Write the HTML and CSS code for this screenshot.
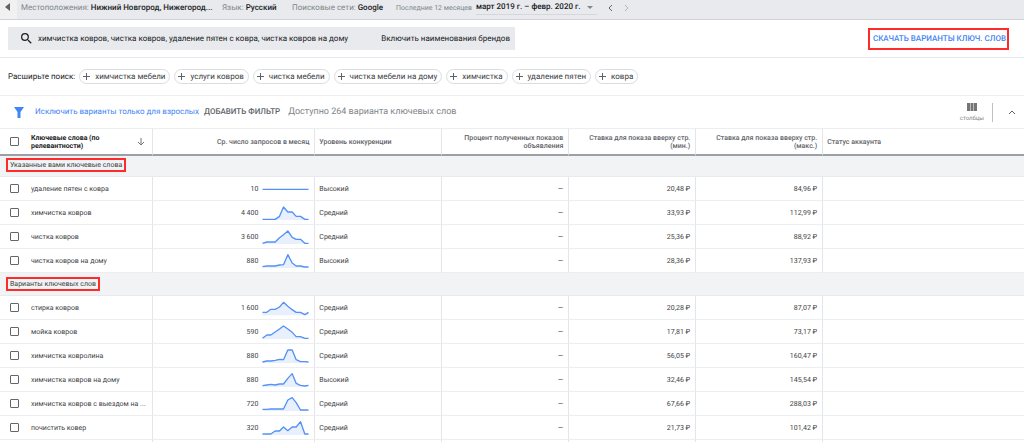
FILE: index.html
```html
<!DOCTYPE html>
<html lang="ru">
<head>
<meta charset="utf-8">
<meta name="viewport" content="width=device-width, initial-scale=1">
<title>Варианты ключевых слов</title>
<link rel="stylesheet" href="styles.css">
</head>
<body>
<header class="topbar">
  <button class="back" aria-label="Назад"><svg viewBox="0 0 5 8"><path d="M5 0v8L0 4z"/></svg></button>
  <div class="setting place"><span>Местоположения:</span> <b>Нижний Новгород, Нижегород...</b></div>
  <div class="setting lang"><span>Язык:</span> <b>Русский</b></div>
  <div class="setting nets"><span>Поисковые сети:</span> <b>Google</b></div>
  <div class="period">
    <span class="period-label">Последние 12 месяцев</span>
    <button class="range">март 2019 г. – февр. 2020 г.<svg viewBox="0 0 6 3"><path d="M0 0h6L3 3z"/></svg></button>
  </div>
  <button class="step" aria-label="Предыдущий период"><svg viewBox="0 0 5 8"><path d="M4 1L1 4l3 3"/></svg></button>
  <button class="step off" aria-label="Следующий период"><svg viewBox="0 0 5 8"><path d="M1 1l3 3-3 3"/></svg></button>
</header>

<section class="search-band">
  <div class="search">
    <svg class="lens" viewBox="3 3 18 18"><path d="M15.5 14h-.79l-.28-.27A6.47 6.47 0 0 0 16 9.5 6.5 6.5 0 1 0 9.5 16c1.61 0 3.09-.59 4.23-1.57l.27.28v.79l5 4.99L20.49 19l-4.99-5zm-6 0C7.01 14 5 11.99 5 9.5S7.01 5 9.5 5 14 7.01 14 9.5 11.99 14 9.5 14z"/></svg>
    <input class="query" type="text" aria-label="Ключевые слова" value="химчистка ковров, чистка ковров, удаление пятен с ковра, чистка ковров на дому">
    <button class="brands">Включить наименования брендов</button>
  </div>
  <button class="download">СКАЧАТЬ ВАРИАНТЫ КЛЮЧ. СЛОВ</button>
</section>

<section class="expand">
  <span class="expand-label">Расширьте поиск:</span>
  <button class="chip"><i class="plus"></i>химчистка мебели</button>
  <button class="chip"><i class="plus"></i>услуги ковров</button>
  <button class="chip"><i class="plus"></i>чистка мебели</button>
  <button class="chip"><i class="plus"></i>чистка мебели на дому</button>
  <button class="chip"><i class="plus"></i>химчистка</button>
  <button class="chip"><i class="plus"></i>удаление пятен</button>
  <button class="chip"><i class="plus"></i>ковра</button>
</section>

<section class="toolbar">
  <svg class="funnel" viewBox="0 0 10 11"><path d="M0 0h10L6.500 5v6h-3V5z"/></svg>
  <button class="adult">Исключить варианты только для взрослых</button>
  <button class="add-filter">ДОБАВИТЬ ФИЛЬТР</button>
  <span class="available">Доступно 264 варианта ключевых слов</span>
  <button class="columns"><svg viewBox="0 0 10 8"><path d="M0 0h3v8H0zM3.500 0h3v8h-3zM7 0h3v8H7z"/></svg>столбцы</button>
  <button class="collapse" aria-label="Свернуть"><svg viewBox="0 0 8 5"><path d="M1 4l3-3 3 3"/></svg></button>
</section>

<table class="grid">
  <colgroup><col class="c-key"><col class="c-vol"><col class="c-mid"><col class="c-mid"><col class="c-mid"><col class="c-mid"><col></colgroup>
  <thead>
    <tr>
      <th scope="col"><div class="key"><input type="checkbox" aria-label="Выбрать все"><span class="sort-name">Ключевые слова (по релевантности)</span><svg class="sort" viewBox="0 0 8 8"><path d="M4 0v7M1 4l3 3 3-3"/></svg></div></th>
      <th scope="col" class="num">Ср. число запросов в месяц</th>
      <th scope="col">Уровень конкуренции</th>
      <th scope="col" class="num">Процент полученных показов<br>объявления</th>
      <th scope="col" class="num">Ставка для показа вверху стр.<br>(мин.)</th>
      <th scope="col" class="num">Ставка для показа вверху стр.<br>(макс.)</th>
      <th scope="col">Статус аккаунта</th>
    </tr>
  </thead>
  <tbody>
    <tr class="group first"><th colspan="7" scope="rowgroup"><span class="mark">Указанные вами ключевые слова</span></th></tr>
    <tr>
      <td><label class="key"><input type="checkbox"><span>удаление пятен с ковра</span></label></td>
      <td><div class="vol">10<svg viewBox="0 0 140 48"><polyline points="1,25 139,25"/></svg></div></td>
      <td>Высокий</td><td class="num">—</td><td class="num">20,48 ₽</td><td class="num">84,96 ₽</td><td></td>
    </tr>
    <tr>
      <td><label class="key"><input type="checkbox"><span>химчистка ковров</span></label></td>
      <td><div class="vol">4 400<svg viewBox="0 0 140 48"><polygon points="1,45 1,43 39,43 52,34 64,6 77,21 90,21 102,34 115,34 128,43 139,43 139,45"/><polyline points="1,43 14,43 26,43 39,43 52,34 64,6 77,21 90,21 102,34 115,34 128,43 139,43"/></svg></div></td>
      <td>Средний</td><td class="num">—</td><td class="num">33,93 ₽</td><td class="num">112,99 ₽</td><td></td>
    </tr>
    <tr>
      <td><label class="key"><input type="checkbox"><span>чистка ковров</span></label></td>
      <td><div class="vol">3 600<svg viewBox="0 0 140 48"><polygon points="1,45 1,43 14,39 39,39 52,26 64,17 77,6 90,25 102,31 115,31 128,43 139,43 139,45"/><polyline points="1,43 14,39 26,39 39,39 52,26 64,17 77,6 90,25 102,31 115,31 128,43 139,43"/></svg></div></td>
      <td>Средний</td><td class="num">—</td><td class="num">25,36 ₽</td><td class="num">88,92 ₽</td><td></td>
    </tr>
    <tr>
      <td><label class="key"><input type="checkbox"><span>чистка ковров на дому</span></label></td>
      <td><div class="vol">880<svg viewBox="0 0 140 48"><polygon points="1,45 1,41 14,39 39,39 52,36 64,35 77,5 90,30 102,39 115,39 128,42 139,42 139,45"/><polyline points="1,41 14,39 26,39 39,39 52,36 64,35 77,5 90,30 102,39 115,39 128,42 139,42"/></svg></div></td>
      <td>Высокий</td><td class="num">—</td><td class="num">28,36 ₽</td><td class="num">137,93 ₽</td><td></td>
    </tr>
    <tr class="group"><th colspan="7" scope="rowgroup"><span class="mark">Варианты ключевых слов</span></th></tr>
    <tr>
      <td><label class="key"><input type="checkbox"><span>стирка ковров</span></label></td>
      <td><div class="vol">1 600<svg viewBox="0 0 140 48"><polygon points="1,46 1,37 14,37 26,28 39,28 52,21 64,7 77,19 90,29 102,37 115,37 128,44 139,37 139,46"/><polyline points="1,37 14,37 26,28 39,28 52,21 64,7 77,19 90,29 102,37 115,37 128,44 139,37"/></svg></div></td>
      <td>Средний</td><td class="num">—</td><td class="num">20,28 ₽</td><td class="num">87,07 ₽</td><td></td>
    </tr>
    <tr>
      <td><label class="key"><input type="checkbox"><span>мойка ковров</span></label></td>
      <td><div class="vol">590<svg viewBox="0 0 140 48"><polygon points="1,45 1,43 14,33 26,33 39,24 52,15 64,6 77,15 90,25 102,38 115,38 128,43 139,43 139,45"/><polyline points="1,43 14,33 26,33 39,24 52,15 64,6 77,15 90,25 102,38 115,38 128,43 139,43"/></svg></div></td>
      <td>Средний</td><td class="num">—</td><td class="num">17,81 ₽</td><td class="num">73,17 ₽</td><td></td>
    </tr>
    <tr>
      <td><label class="key"><input type="checkbox"><span>химчистка ковролина</span></label></td>
      <td><div class="vol">880<svg viewBox="0 0 140 48"><polygon points="1,45 1,42 14,39 26,39 39,37 52,34 64,35 77,6 90,6 102,35 115,41 139,42 139,45"/><polyline points="1,42 14,39 26,39 39,37 52,34 64,35 77,6 90,6 102,35 115,41 128,41 139,42"/></svg></div></td>
      <td>Средний</td><td class="num">—</td><td class="num">56,05 ₽</td><td class="num">160,47 ₽</td><td></td>
    </tr>
    <tr>
      <td><label class="key"><input type="checkbox"><span>химчистка ковров на дому</span></label></td>
      <td><div class="vol">880<svg viewBox="0 0 140 48"><polygon points="1,45 1,41 26,37 39,39 52,36 64,36 77,19 90,5 102,34 115,40 128,42 139,40 139,45"/><polyline points="1,41 14,39 26,37 39,39 52,36 64,36 77,19 90,5 102,34 115,40 128,42 139,40"/></svg></div></td>
      <td>Высокий</td><td class="num">—</td><td class="num">32,46 ₽</td><td class="num">145,54 ₽</td><td></td>
    </tr>
    <tr>
      <td><label class="key"><input type="checkbox"><span>химчистка ковров с выездом на ...</span></label></td>
      <td><div class="vol">720<svg viewBox="0 0 140 48"><polygon points="1,45 1,40 26,39 64,39 77,12 90,5 102,20 115,42 139,42 139,45"/><polyline points="1,40 14,40 26,39 39,39 52,39 64,39 77,12 90,5 102,20 115,42 128,42 139,42"/></svg></div></td>
      <td>Средний</td><td class="num">—</td><td class="num">67,66 ₽</td><td class="num">288,03 ₽</td><td></td>
    </tr>
    <tr>
      <td><label class="key"><input type="checkbox"><span>почистить ковер</span></label></td>
      <td><div class="vol">320<svg viewBox="0 0 140 48"><polygon points="1,45 1,42 26,42 39,33 52,33 64,21 77,32 90,21 102,21 115,5 128,42 139,42 139,45"/><polyline points="1,42 14,42 26,42 39,33 52,33 64,21 77,32 90,21 102,21 115,5 128,42 139,42"/></svg></div></td>
      <td>Средний</td><td class="num">—</td><td class="num">21,73 ₽</td><td class="num">101,42 ₽</td><td></td>
    </tr>
    <tr class="tail"><td></td><td></td><td></td><td></td><td></td><td></td><td></td></tr>
  </tbody>
</table>
</body>
</html>
```
FILE: styles.css
```css
* { box-sizing: border-box; }

body {
  margin: 0;
  background: #fff;
  color: #3c4043;
  font-family: Roboto, "Liberation Sans", sans-serif;
  font-size: 8px;
  line-height: 8px;
  text-rendering: geometricPrecision;
}

button, input { text-rendering: inherit; }

button {
  border: 0;
  padding: 0;
  background: none;
  color: inherit;
  font: inherit;
  white-space: nowrap;
  cursor: pointer;
}

svg { display: block; flex: none; }

/* Top bar */
.topbar {
  display: flex;
  align-items: center;
  height: 20px;
  padding-bottom: 4px;
  background: #e8eaed;
  border-bottom: 1px solid #d0d2d5;
  white-space: nowrap;
}
.back {
  width: 17px;
  height: 19px;
  margin-bottom: -4px;
  padding: 0 0 5px 5px;
  background: #f1f1f1;
}
.back svg { width: 5px; height: 8px; fill: #5f6368; }
.setting, .period-label { color: #80868b; }
.setting b, .range { color: #202124; font-weight: 500; }
.place { width: 201px; margin-left: 4px; }
.lang { width: 70px; }
.nets { width: 104px; }
.period { display: flex; align-items: center; gap: 4px; }
.period-label { font-size: 7px; }
.range {
  display: flex;
  justify-content: space-between;
  align-items: center;
  width: 121px;
  height: 14px;
  border-bottom: 1px solid #d5d7da;
  padding-right: 4px;
}
.range svg { width: 6px; height: 3px; fill: #80868b; }
.step { margin-left: 11px; }
.step svg { width: 5px; height: 8px; fill: none; stroke: #5f6368; }
.step.off svg { stroke: #b0b3b7; }

/* Search */
.search-band {
  display: flex;
  justify-content: space-between;
  align-items: center;
  height: 38px;
  padding: 0 15px 0 8px;
  border-bottom: 1px solid #e8eaed;
}
.search {
  display: flex;
  align-items: center;
  width: 507px;
  height: 23px;
  padding: 0 5px 0 13px;
  background: #e8eaed;
}
.lens { width: 11px; height: 11px; fill: #202124; }
.query {
  flex: 1;
  min-width: 0;
  margin-left: 6px;
  padding: 0;
  border: 0;
  background: none;
  color: #202124;
  font: inherit;
}
.brands { color: #202124; }
.download {
  height: 22px;
  padding: 0 1px 0 3px;
  border: 2px solid #ff2a2a;
  color: #4285f4;
  font-weight: 500;
}

/* Suggestions */
.expand {
  display: flex;
  align-items: center;
  gap: 4px;
  height: 38px;
  padding-left: 8px;
  border-bottom: 1px solid #eeeff1;
}
.expand-label { color: #202124; }
.chip {
  display: flex;
  align-items: center;
  gap: 5px;
  height: 15px;
  padding: 0 4px 0 3px;
  border: 1px solid #dadce0;
  border-radius: 8px;
}
.plus {
  width: 7px;
  height: 7px;
  background:
    linear-gradient(#5f6368, #5f6368) center / 7px 1px no-repeat,
    linear-gradient(#5f6368, #5f6368) center / 1px 7px no-repeat;
}

/* Filter bar */
.toolbar {
  display: flex;
  align-items: center;
  height: 32px;
  padding: 0 8px 0 14px;
}
.funnel { width: 10px; height: 11px; fill: #4285f4; }
.adult { margin-left: 11px; color: #4285f4; }
.add-filter { margin-left: 5px; color: #5f6368; font-weight: 500; }
.available { margin-left: 8px; color: #80868b; font-size: 9px; }
.columns {
  display: flex;
  flex-direction: column;
  align-items: center;
  gap: 5px;
  margin-left: auto;
  padding-right: 8px;
  color: #80868b;
  font-size: 6px;
  line-height: 6px;
}
.columns svg { width: 10px; height: 8px; fill: #757575; }
.collapse {
  height: 19px;
  padding-left: 15px;
  border-left: 1px solid #bdc1c6;
}
.collapse svg { width: 8px; height: 5px; fill: none; stroke: #5f6368; }

/* Keyword table */
.grid {
  width: 100%;
  table-layout: fixed;
  border-collapse: separate;
  border-spacing: 0;
  font-size: 7px;
}
.c-key { width: 14.8%; }
.c-vol { width: 15.9%; }
.c-mid { width: 12.4%; }
.grid th, .grid td {
  padding: 0 5px 0 4px;
  border-left: 1px solid #e3e5e8;
  text-align: left;
  vertical-align: middle;
}
.grid th:first-child, .grid td:first-child { border-left: 0; padding-left: 10px; }
.grid td { height: 24px; border-bottom: 1px solid #eceef0; white-space: nowrap; }
.grid thead th {
  height: 28px;
  border-top: 1px solid #eceef0;
  border-bottom: 2px solid #9aa0a6;
  color: #5f6368;
  font-weight: 500;
}
.grid .num { text-align: right; }
.key { display: flex; align-items: center; }
.key input {
  appearance: none;
  flex: none;
  width: 9px;
  height: 9px;
  margin: 0 12px 0 0;
  border: 1px solid #666;
  border-radius: 1px;
}
.key input:checked { background: #4285f4; }
.sort-name { flex: 1; padding-right: 20px; color: #202124; font-weight: 700; }
.sort { width: 8px; height: 8px; margin-right: 2px; fill: none; stroke: #757575; }
.vol { display: flex; align-items: center; justify-content: flex-end; gap: 4px; }
.vol svg { width: 47px; height: 16px; }
.vol polyline { fill: none; stroke: #5491f5; stroke-width: 4; stroke-linejoin: round; }
.vol polygon { fill: #e8f0fe; }
.grid .group th {
  height: 23px;
  border-bottom: 1px solid #e8eaed;
  padding-left: 6px;
  background: #f1f3f4;
  font-weight: 400;
}
.grid .first th { height: 21px; padding-bottom: 2px; }
.mark {
  display: inline-block;
  padding: 1px 2px;
  border: 2px solid #ff2a2a;
}
.grid .tail td { height: 3px; border-bottom: 0; }
```
